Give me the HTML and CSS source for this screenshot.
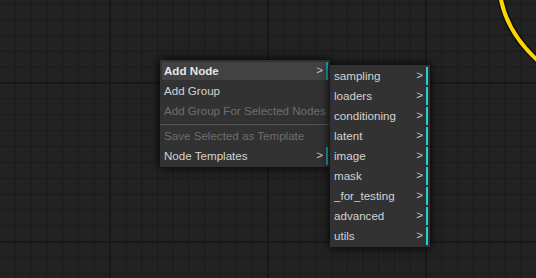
FILE: index.html
```html
<!DOCTYPE html>
<html lang="en">
<head>
  <meta charset="UTF-8" />
  <meta name="viewport" content="width=device-width, initial-scale=1.0"/>
  <title>Graph canvas menu</title>
  <link rel="stylesheet" href="styles.css">
</head>
<body>

  <div class="canvas">
    <!-- link wire coming in from a node off screen -->
    <svg class="link" width="536" height="278" viewBox="0 0 536 278">
      <path class="link-shadow" d="M500 -6 Q506 35 544 66" />
      <path class="link-line" d="M500 -6 Q506 35 544 66" />
    </svg>

    <div class="menu menu-main">
      <div class="entry has-sub hover">Add Node</div>
      <div class="entry">Add Group</div>
      <div class="entry disabled">Add Group For Selected Nodes</div>
      <div class="separator"></div>
      <div class="entry disabled">Save Selected as Template</div>
      <div class="entry has-sub">Node Templates</div>
    </div>

    <div class="menu menu-sub">
      <div class="entry has-sub">sampling</div>
      <div class="entry has-sub">loaders</div>
      <div class="entry has-sub">conditioning</div>
      <div class="entry has-sub">latent</div>
      <div class="entry has-sub">image</div>
      <div class="entry has-sub">mask</div>
      <div class="entry has-sub">_for_testing</div>
      <div class="entry has-sub">advanced</div>
      <div class="entry has-sub">utils</div>
    </div>
  </div>

</body>
</html>
```

FILE: styles.css
```css
html, body {
  margin: 0;
  padding: 0;
  background: #222;
}
.canvas {
  position: relative;
  width: 536px;
  height: 278px;
  overflow: hidden;
  background-color: #222;
  background-image:
    linear-gradient(to right, #181818 0, #181818 2px, transparent 2px),
    linear-gradient(to bottom, #181818 0, #181818 2px, transparent 2px),
    linear-gradient(to right, #1b1b1b 0, #1b1b1b 1px, transparent 1px),
    linear-gradient(to bottom, #1b1b1b 0, #1b1b1b 1px, transparent 1px);
  background-size: 158px 100%, 100% 159px, 15.8px 100%, 100% 15.9px;
  background-position: 109px 0, 0 82px, 109.6px 0, 0 82.5px;
}
.link {
  position: absolute;
  left: 0;
  top: 0;
  pointer-events: none;
}
.link-shadow {
  fill: none;
  stroke: #111;
  stroke-width: 7;
}
.link-line {
  fill: none;
  stroke: #ffd500;
  stroke-width: 4;
}
.menu {
  position: absolute;
  background: #323232;
  box-shadow: 0 0 10px black;
  font-family: "Liberation Sans", Arial, sans-serif;
  font-size: 11.6px;
  color: #d2d2d2;
}
.menu-main {
  left: 160px;
  top: 60px;
  width: 170px;
}
.menu-sub {
  left: 330px;
  top: 65px;
  width: 100px;
}
.entry {
  position: relative;
  margin: 2px;
  padding: 2px 15px 2px 2px;
  line-height: 14px;
  white-space: nowrap;
}
.entry.hover {
  background: #424242;
  color: #e6e6e6;
  font-weight: bold;
}
.entry.disabled {
  color: #6e6e6e;
}
.entry.has-sub {
  border-right: 2px solid #1fa4a6;
}
.menu-sub .entry.has-sub {
  border-right-color: #1ad4dc;
}
.entry.has-sub::after {
  content: ">";
  position: absolute;
  top: 1px;
  right: 3px;
  font-weight: normal;
  color: #c8c8c8;
}
.separator {
  margin: 3px 0 2px 0;
  border-top: 1px solid #2c2c2c;
  border-bottom: 1px solid #5a5a5a;
}
```
